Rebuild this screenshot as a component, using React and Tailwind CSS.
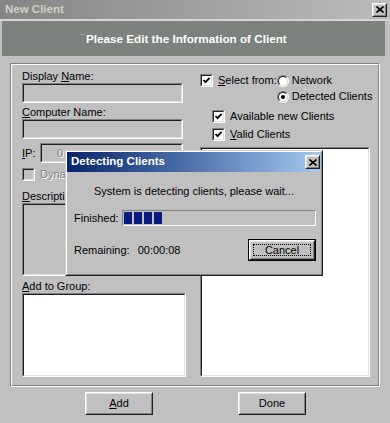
import React from "react";

const Sunken = ({ className = "", inner = "", children }) => (
  <div className={`border border-t-[#808080] border-l-[#808080] border-b-white border-r-white ${className}`}>
    <div className={`w-full h-full border border-t-[#202020] border-l-[#202020] border-b-[#dfdfdf] border-r-[#dfdfdf] ${inner}`}>
      {children}
    </div>
  </div>
);

const Raised = ({ className = "", inner = "", children }) => (
  <div className={`border border-t-white border-l-white border-b-[#202020] border-r-[#202020] ${className}`}>
    <div className={`w-full h-full border border-t-[#e4e4e4] border-l-[#e4e4e4] border-b-[#808080] border-r-[#808080] ${inner}`}>
      {children}
    </div>
  </div>
);

const Check = ({ checked, disabled }) => (
  <Sunken className="w-[13px] h-[13px] shrink-0" inner={disabled ? "bg-[#c0c0c0]" : "bg-white"}>
    {checked && (
      <svg width="9" height="9" viewBox="0 0 9 9" className="block">
        <polyline points="1.5,4 3.5,6.2 7.6,1.8" fill="none" stroke="#000" strokeWidth="1.8" />
      </svg>
    )}
  </Sunken>
);

const Radio = ({ checked }) => (
  <div className="w-[12px] h-[12px] shrink-0 rounded-full border border-t-[#808080] border-l-[#808080] border-b-white border-r-white">
    <div className="w-full h-full rounded-full border border-t-[#202020] border-l-[#202020] border-b-[#dfdfdf] border-r-[#dfdfdf] bg-white flex items-center justify-center">
      {checked && <div className="w-[4px] h-[4px] rounded-full bg-black" />}
    </div>
  </div>
);

const CloseBtn = () => (
  <Raised className="w-[15px] h-[14px] bg-[#c0c0c0]" inner="flex items-center justify-center">
    <svg width="8" height="7" viewBox="0 0 8 7" className="block">
      <path d="M0.5 0.5 L7.5 6.5 M7.5 0.5 L0.5 6.5" stroke="#000" strokeWidth="1.6" />
    </svg>
  </Raised>
);

export default function App() {
  return (
    <div className="relative w-[390px] h-[423px] overflow-hidden bg-[#c0c0c0] text-black text-[11px] font-['Liberation_Sans',Arial,sans-serif]">
      {/* title bar */}
      <div className="h-[19px] flex items-center justify-between bg-gradient-to-r from-[#858585] to-[#bcbcbc] pl-[5px] pr-[3px]">
        <span className="font-bold text-[11.5px] text-[#d4d0c8] leading-none">New Client</span>
        <CloseBtn />
      </div>
      <div className="h-[2px] bg-[#d6d6d6]" />
      {/* header band */}
      <div className="h-[35px] ml-[2px] mr-[5px] bg-[#7c827d] flex items-center pl-[78px]">
        <span className="w-[5px] h-[1px] bg-[#9aa6a6] mr-[1px] -mt-[8px]" />
        <span className="font-bold text-white text-[11.7px] leading-none">Please Edit the Information of Client</span>
      </div>

      {/* group box */}
      <div className="mt-[7px] ml-[10px] w-[370px] h-[324px] border border-t-[#808080] border-l-[#808080] border-r-white border-b-white">
        <div className="w-full h-full border border-t-white border-l-white border-r-[#808080] border-b-[#808080] flex">
          {/* left column */}
          <div className="pl-[10px] pt-[5px] w-[174px] shrink-0">
            <div className="h-[13px] leading-[13px]">Display <span className="underline">N</span>ame:</div>
            <Sunken className="w-[161px] h-[20px]" inner="bg-[#c0c0c0]" />
            <div className="mt-[3px] h-[13px] leading-[13px]"><span className="underline">C</span>omputer Name:</div>
            <Sunken className="w-[161px] h-[20px]" inner="bg-[#c0c0c0]" />
            <div className="mt-[4px] h-[20px] flex items-center">
              <span className="w-[18px] leading-[13px]"><span className="underline">I</span>P:</span>
              <Sunken className="w-[143px] h-[20px]" inner="bg-[#c0c0c0] flex items-center pl-[15px]">
                <span className="text-[#808080] [text-shadow:1px_1px_0_#fff] leading-none">0</span>
              </Sunken>
            </div>
            <div className="mt-[5px] h-[13px] flex items-center">
              <Check disabled />
              <span className="ml-[5px] text-[#808080] [text-shadow:1px_1px_0_#fff] leading-none whitespace-nowrap">Dynamic IP Address</span>
            </div>
            <div className="mt-[9px] h-[13px] leading-[13px]"><span className="underline">D</span>escription:</div>
            <Sunken className="w-[161px] h-[73px]" inner="bg-[#c0c0c0]" />
            <div className="mt-[4px] h-[13px] leading-[13px]"><span className="underline">A</span>dd to Group:</div>
            <Sunken className="w-[164px] h-[84px]" inner="bg-white" />
          </div>

          {/* right column */}
          <div className="ml-[14px] pt-[9px] w-[170px] shrink-0">
            <div className="flex">
              <div className="w-[80px] h-[13px] flex items-center">
                <Check checked />
                <span className="ml-[5px] leading-none whitespace-nowrap"><span className="underline">S</span>elect from:</span>
              </div>
              <div className="flex flex-col gap-[3px]">
                <div className="h-[13px] flex items-center">
                  <Radio />
                  <span className="ml-[3px] leading-none whitespace-nowrap">Network</span>
                </div>
                <div className="h-[13px] flex items-center">
                  <Radio checked />
                  <span className="ml-[3px] leading-none whitespace-nowrap">Detected Clients</span>
                </div>
              </div>
            </div>
            <div className="mt-[7px] ml-[12px] h-[13px] flex items-center">
              <Check checked />
              <span className="ml-[5px] leading-none whitespace-nowrap">Available new Clients</span>
            </div>
            <div className="mt-[5px] ml-[12px] h-[13px] flex items-center">
              <Check checked />
              <span className="ml-[5px] leading-none whitespace-nowrap"><span className="underline">V</span>alid Clients</span>
            </div>
            <Sunken className="mt-[6px] w-[170px] h-[230px]" inner="bg-white" />
          </div>
        </div>
      </div>

      {/* buttons */}
      <div className="mt-[5px] flex">
        <Raised className="ml-[85px] w-[68px] h-[23px]" inner="flex items-center justify-center">
          <span className="leading-none"><span className="underline">A</span>dd</span>
        </Raised>
        <Raised className="ml-[85px] w-[68px] h-[23px]" inner="flex items-center justify-center">
          <span className="leading-none">Done</span>
        </Raised>
      </div>

      {/* Detecting Clients dialog */}
      <div className="absolute left-[65px] top-[150px] w-[258px] h-[126px] bg-[#c0c0c0] border border-t-[#d4d0c8] border-l-[#d4d0c8] border-b-[#202020] border-r-[#202020]">
        <div className="w-full h-full border border-t-white border-l-white border-b-[#808080] border-r-[#808080]">
          <div className="h-[20px] flex items-center justify-between bg-gradient-to-r from-[#0a246a] to-[#a6caf0] pl-[4px] pr-[1px]">
            <span className="font-bold text-white text-[11.5px] leading-none">Detecting Clients</span>
            <CloseBtn />
          </div>
          <div className="mt-[13px] h-[13px] leading-[13px] text-center">System is detecting clients, please wait...</div>
          <div className="mt-[12px] h-[16px] flex items-center pl-[7px]">
            <span className="w-[48px] leading-none">Finished:</span>
            <div className="w-[194px] h-[16px] border border-t-[#808080] border-l-[#808080] border-b-white border-r-white flex items-center gap-[2px] pl-[1px]">
              <div className="w-[8px] h-[12px] bg-[#0a1a80]" />
              <div className="w-[8px] h-[12px] bg-[#0a1a80]" />
              <div className="w-[8px] h-[12px] bg-[#0a1a80]" />
              <div className="w-[8px] h-[12px] bg-[#0a1a80]" />
            </div>
          </div>
          <div className="mt-[13px] h-[22px] flex items-center pl-[7px]">
            <span className="leading-none">Remaining:</span>
            <span className="ml-[8px] leading-none">00:00:08</span>
            <div className="ml-auto mr-[5px] w-[68px] h-[22px] border border-black">
              <Raised className="w-full h-full" inner="flex items-center justify-center p-[2px]">
                <div className="w-full h-full border border-dotted border-black flex items-center justify-center">
                  <span className="leading-none">Cancel</span>
                </div>
              </Raised>
            </div>
          </div>
        </div>
      </div>
    </div>
  );
}
